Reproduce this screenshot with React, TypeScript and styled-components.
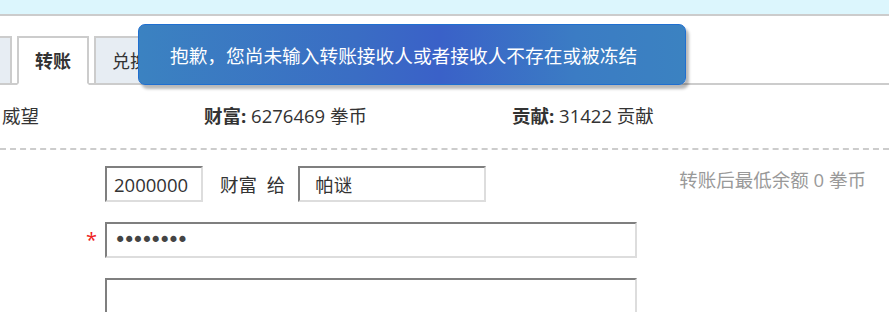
import React from 'react';
import styled, { createGlobalStyle } from 'styled-components';

const GlobalStyle = createGlobalStyle`
    html, body {
        margin: 0;
        padding: 0;
        background: #fff;
    }
    body {
        width: 889px;
        height: 312px;
        overflow: hidden;
        font-family: "Open Sans", "Noto Sans CJK SC", sans-serif;
        font-size: 18.5px;
        color: #333;
    }
`;

const Page = styled.div`
    position: relative;
    width: 889px;
    height: 312px;
    overflow: hidden;
`;

const TopStrip = styled.div`
    height: 14px;
    background: #dcf6fd;
    border-bottom: 2px solid #cccccc;
`;

const TabBar = styled.div`
    display: flex;
    align-items: flex-end;
    gap: 5px;
    height: 67px;
    margin-left: -60px;
    border-bottom: 2px solid #cccccc;
`;

const Tab = styled.div<{ $active?: boolean; $width: number }>`
    box-sizing: border-box;
    width: ${(p) => p.$width}px;
    height: ${(p) => (p.$active ? 49 : 47)}px;
    margin-bottom: ${(p) => (p.$active ? -2 : 0)}px;
    border: 2px solid #cccccc;
    border-bottom: ${(p) => (p.$active ? '2px solid #fff' : 'none')};
    background: ${(p) => (p.$active ? '#fff' : '#e7edf3')};
    font-weight: ${(p) => (p.$active ? 700 : 400)};
    font-size: 18px;
    display: flex;
    align-items: center;
    justify-content: center;
    padding-bottom: 2px;
    color: #333;
`;

const InfoRow = styled.div`
    display: grid;
    grid-template-columns: 202px 308px auto;
    padding: 19px 0 0 2px;
    height: 44px;
    line-height: 24px;
    border-bottom: 2px dashed #cccccc;
`;

const Label = styled.b`
    font-weight: 700;
`;

const Form = styled.div`
    display: grid;
    grid-template-columns: 105px 1fr;
    grid-auto-rows: 36px;
    row-gap: 20px;
    padding-top: 16px;
`;

const Required = styled.span`
    color: #ee2222;
    text-align: right;
    padding-right: 8px;
    line-height: 36px;
    font-size: 20px;
`;

const Field = styled.div`
    display: flex;
    align-items: center;
    height: 36px;
`;

const Input = styled.input<{ $width: number; $indent?: number }>`
    box-sizing: border-box;
    width: ${(p) => p.$width}px;
    height: 36px;
    border-style: solid;
    border-width: 2px;
    border-color: #7f7f7f #dddddd #dddddd #7f7f7f;
    padding: 0 8px 0 ${(p) => p.$indent ?? 7}px;
    font-family: inherit;
    font-size: 18.5px;
    color: #333;
    background: #fff;
    outline: none;
`;

const PasswordInput = styled(Input)`
    font-family: "DejaVu Sans", sans-serif;
    font-size: 21px;
    letter-spacing: -3.5px;
    color: #444;
`;

const Inline = styled.span`
    margin: 0 13px 0 17px;
    word-spacing: 5px;
    white-space: pre;
`;

const Note = styled.span`
    margin-left: auto;
    margin-right: 23px;
    color: #999;
    margin-top: -10px;
`;

const Toast = styled.div`
    position: absolute;
    left: 138px;
    top: 24px;
    box-sizing: border-box;
    width: 548px;
    height: 61px;
    border: 1px solid #1f6fd0;
    border-radius: 7px;
    background: linear-gradient(90deg, #3b82c1 0%, #3a6dc4 40%, #3a61c8 55%, #3b7cc4 80%, #3b82c1 100%);
    box-shadow: 3px 4px 3px rgba(0, 0, 0, 0.28);
    color: #fff;
    display: flex;
    align-items: center;
    padding-left: 31px;
    font-size: 18.7px;
`;

const App: React.FC = () => {
    return (
        <Page>
            <GlobalStyle />
            <TopStrip />
            <TabBar>
                <Tab $width={72}>威望</Tab>
                <Tab $width={72} $active>
                    转账
                </Tab>
                <Tab $width={72}>兑换</Tab>
                <Tab $width={72}>记录</Tab>
            </TabBar>
            <InfoRow>
                <span>威望</span>
                <span>
                    <Label>财富:</Label> 6276469 拳币
                </span>
                <span>
                    <Label>贡献:</Label> 31422 贡献
                </span>
            </InfoRow>
            <Form>
                <span />
                <Field>
                    <Input $width={98} defaultValue="2000000" />
                    <Inline>财富 给</Inline>
                    <Input $width={188} $indent={15} defaultValue="帕谜" />
                    <Note>转账后最低余额 0 拳币</Note>
                </Field>
                <Required>*</Required>
                <Field>
                    <PasswordInput $width={532} type="password" defaultValue="12345678" />
                </Field>
                <span />
                <Field>
                    <Input $width={532} />
                </Field>
            </Form>
            <Toast>抱歉，您尚未输入转账接收人或者接收人不存在或被冻结</Toast>
        </Page>
    );
};

export default App;
